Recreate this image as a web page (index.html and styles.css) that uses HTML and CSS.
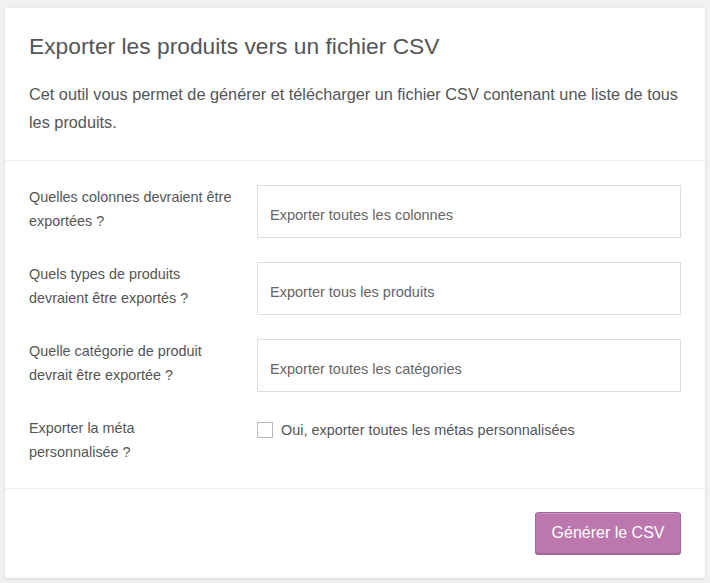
FILE: index.html
```html
<!DOCTYPE html>
<html lang="fr">
<head>
<meta charset="utf-8">
<title>Exporter les produits</title>
<link rel="stylesheet" href="styles.css">
</head>
<body>
<div class="card">
  <header class="card-head">
    <h2 class="title">Exporter les produits vers un fichier CSV</h2>
    <p class="desc">Cet outil vous permet de générer et télécharger un fichier CSV contenant une liste de tous les produits.</p>
  </header>
  <section class="form">
    <div class="row">
      <label class="label">Quelles colonnes devraient être exportées&nbsp;?</label>
      <div class="field"><div class="select">Exporter toutes les colonnes</div></div>
    </div>
    <div class="row">
      <label class="label">Quels types de produits devraient être exportés&nbsp;?</label>
      <div class="field"><div class="select">Exporter tous les produits</div></div>
    </div>
    <div class="row">
      <label class="label">Quelle catégorie de produit devrait être exportée&nbsp;?</label>
      <div class="field"><div class="select">Exporter toutes les catégories</div></div>
    </div>
    <div class="row">
      <label class="label">Exporter la méta personnalisée&nbsp;?</label>
      <div class="field check-field"><span class="checkbox"></span><span class="check-text">Oui, exporter toutes les métas personnalisées</span></div>
    </div>
  </section>
  <footer class="card-foot">
    <button class="btn" type="button">Générer le CSV</button>
  </footer>
</div>
</body>
</html>
```
FILE: styles.css
```css
* { box-sizing: border-box; }
html, body { margin: 0; }
body {
  background: #f1f1f1;
  padding: 8px 5px 5px 5px;
  font-family: "Liberation Sans", Arial, sans-serif;
  color: #555;
}
.card {
  background: #fff;
  box-shadow: 0 1px 3px rgba(0,0,0,0.12);
  width: 700px;
}
.card-head {
  padding: 24px 24px 24px;
  border-bottom: 1px solid #eee;
}
.title {
  margin: 0;
  font-size: 22.8px;
  line-height: 28px;
  font-weight: 400;
  color: #555;
}
.desc {
  margin: 20px 0 0;
  font-size: 16.3px;
  line-height: 28px;
  color: #555;
}
.form {
  padding: 24px 24px;
  border-bottom: 1px solid #eee;
  display: flex;
  flex-direction: column;
  gap: 24px;
}
.row {
  display: grid;
  grid-template-columns: 228px 1fr;
}
.label {
  font-size: 14.4px;
  line-height: 24px;
  padding-right: 20px;
  color: #555;
}
.select {
  height: 53px;
  border: 1px solid #ddd;
  padding: 17px 12px 0;
  font-size: 14.5px;
  line-height: 24px;
  color: #666;
}
.check-field {
  display: flex;
  align-items: center;
  gap: 8px;
  height: 28px;
}
.checkbox {
  width: 16px;
  height: 16px;
  border: 1px solid #b4b9be;
  background: #fff;
}
.check-text {
  font-size: 14.45px;
  color: #555;
}
.card-foot {
  padding: 23px 24px 24px;
  display: flex;
  justify-content: flex-end;
}
.btn {
  width: 146px;
  height: 42px;
  background: #bb77ae;
  border: 1px solid #a36597;
  border-radius: 3px;
  color: #fff;
  font-family: "Liberation Sans", Arial, sans-serif;
  font-size: 16px;
  box-shadow: inset 0 1px 0 rgba(255,255,255,0.2), 0 1px 0 #a36597;
  padding: 0;
}
```
